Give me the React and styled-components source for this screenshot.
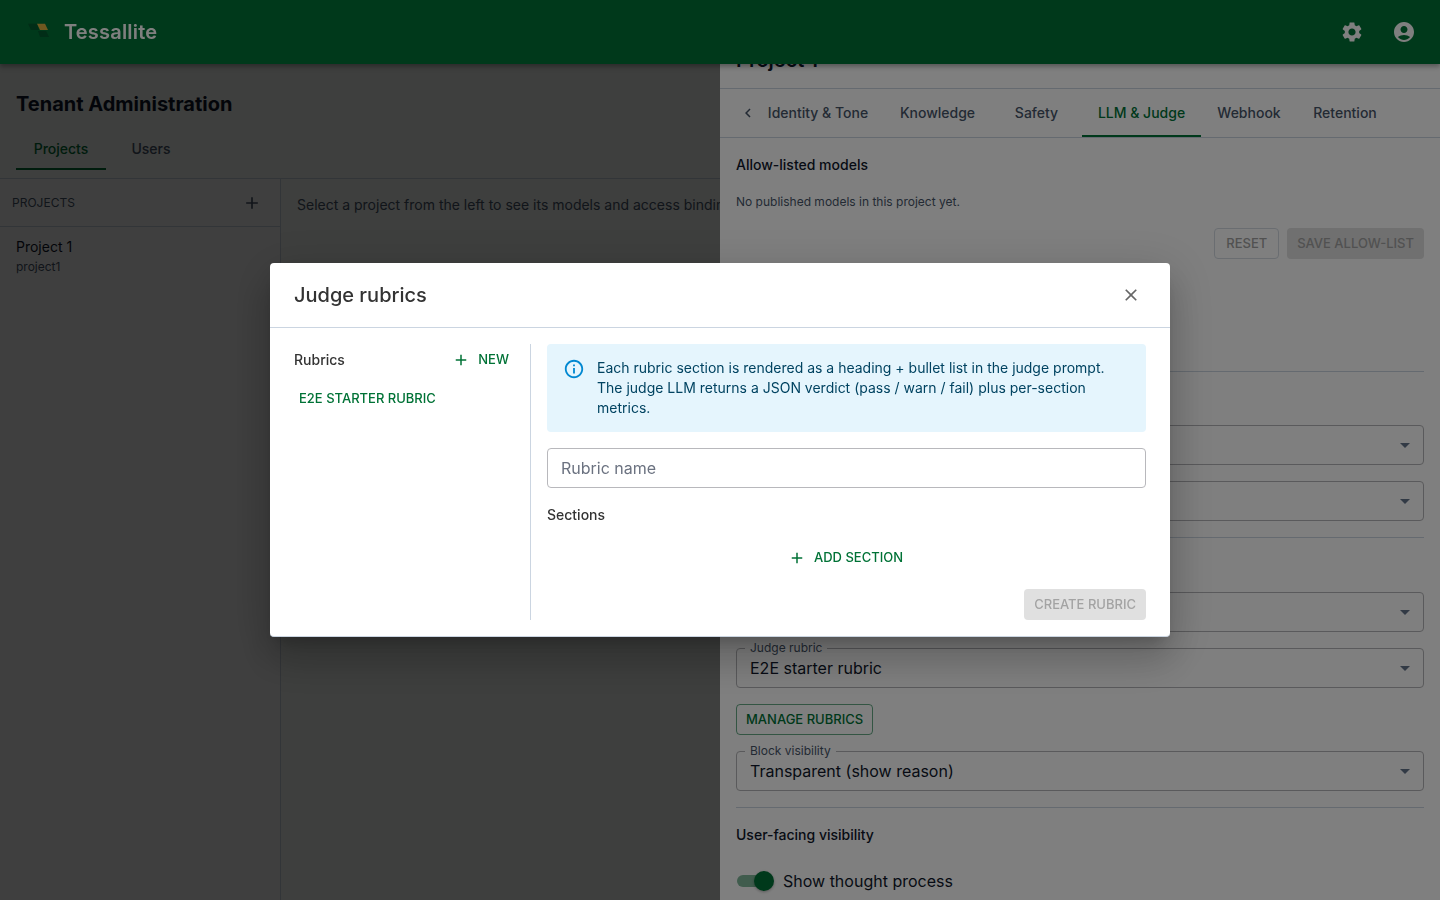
import React from "react";
import styled, { createGlobalStyle } from "styled-components";

const GlobalStyle = createGlobalStyle`
  * {
    box-sizing: border-box;
  }
  html, body {
    margin: 0;
    padding: 0;
    height: 100%;
    overflow: hidden;
    background: #f8fcf8;
    font-family: "Inter", "Liberation Sans", sans-serif;
    color: #0f172a;
  }
`;

const Page = styled.div`
  height: 900px;
  display: flex;
  flex-direction: column;
`;

const Header = styled.header`
  position: relative;
  z-index: 20;
  height: 64px;
  flex: none;
  background: #007236;
  box-shadow: 0 2px 4px rgba(0, 0, 0, 0.2), 0 4px 5px rgba(0, 0, 0, 0.14);
  display: flex;
  align-items: center;
  padding: 0 24px;
`;

const Brand = styled.div`
  display: flex;
  align-items: center;
  gap: 12px;
  flex: 1;
  font-size: 20px;
  font-weight: 600;
  letter-spacing: 0.2px;
  color: #fff;
`;

const HeaderIcons = styled.div`
  display: flex;
  gap: 28px;
  color: #fff;
  align-items: center;
`;

const Title = styled.h1`
  margin: 0;
  padding: 28px 16px 0;
  font-size: 20px;
  line-height: 24px;
  font-weight: 700;
  color: #0f172a;
`;

const TopTabs = styled.div`
  display: flex;
  margin-top: 12px;
  padding: 0 16px 8px;
  height: 51px;
  border-bottom: 1px solid #cbd5e1;
`;

const TopTab = styled.div`
  width: ${(p) => p.$w}px;
  height: 42px;
  padding-bottom: 2px;
  display: flex;
  align-items: center;
  justify-content: center;
  font-size: 14px;
  font-weight: 500;
  color: ${(p) => (p.$active ? "#007236" : "#475569")};
  box-shadow: ${(p) => (p.$active ? "inset 0 -2px 0 #007236" : "none")};
`;

const Split = styled.div`
  flex: 1;
  display: flex;
  min-height: 0;
`;

const Sidebar = styled.aside`
  width: 281px;
  flex: none;
  background: #fff;
  border-right: 1px solid #cbd5e1;
`;

const SidebarHead = styled.div`
  height: 48px;
  display: flex;
  align-items: center;
  justify-content: space-between;
  padding: 0 18px 0 12px;
  border-bottom: 1px solid #cbd5e1;
  font-size: 12px;
  color: #475569;
`;

const ProjectRow = styled.div`
  padding: 10px 16px;
`;

const ProjectName = styled.div`
  font-size: 14px;
  line-height: 20px;
  color: #0f172a;
`;

const ProjectSlug = styled.div`
  font-size: 12px;
  line-height: 18px;
  color: #475569;
  margin-top: 1px;
`;

const Hint = styled.div`
  padding: 16px;
  font-size: 14px;
  line-height: 20px;
  color: #475569;
  white-space: nowrap;
  overflow: hidden;
  flex: 1;
`;

const DrawerBackdrop = styled.div`
  position: fixed;
  inset: 0;
  z-index: 10;
  background: rgba(0, 0, 0, 0.5);
`;

const Drawer = styled.aside`
  position: fixed;
  top: 0;
  right: 0;
  bottom: 0;
  width: 720px;
  z-index: 11;
  background: #fff;
  overflow: hidden;
`;

const DrawerHeading = styled.div`
  height: 89px;
  padding: 46px 16px 0;
  border-bottom: 1px solid #cbd5e1;
  font-size: 20px;
  line-height: 28px;
  font-weight: 600;
  color: #0f172a;
`;

const DrawerTabs = styled.div`
  height: 49px;
  display: flex;
  align-items: stretch;
  border-bottom: 1px solid #cbd5e1;
`;

const ScrollArrow = styled.div`
  width: 40px;
  flex: none;
  display: flex;
  align-items: center;
  justify-content: center;
  padding-left: 16px;
  color: #475569;
`;

const DrawerTab = styled.div`
  margin-left: ${(p) => p.$ml || 0}px;
  width: ${(p) => p.$w}px;
  height: 48px;
  padding-bottom: 2px;
  display: flex;
  align-items: center;
  justify-content: center;
  font-size: 14px;
  font-weight: 500;
  color: ${(p) => (p.$active ? "#007236" : "#475569")};
  box-shadow: ${(p) => (p.$active ? "inset 0 -2px 0 #007236" : "none")};
`;

const DrawerBody = styled.div`
  padding: 0 16px;
  display: flex;
  flex-direction: column;
`;

const SectionTitle = styled.div`
  font-size: 14px;
  line-height: 20px;
  font-weight: 500;
  color: #0f172a;
  margin-top: ${(p) => p.$mt}px;
`;

const Muted = styled.div`
  font-size: 12px;
  line-height: 18px;
  color: #475569;
  margin-top: 18px;
`;

const ButtonRow = styled.div`
  display: flex;
  justify-content: flex-end;
  gap: 8px;
  margin-top: 17px;
`;

const ResetButton = styled.div`
  height: 31px;
  padding: 0 11px 1px;
  display: flex;
  align-items: center;
  border: 1px solid #d4dae2;
  border-radius: 4px;
  font-size: 13px;
  font-weight: 500;
  color: #a3a3a3;
`;

const SaveButton = styled.div`
  height: 31px;
  padding: 0 10px 1px;
  display: flex;
  align-items: center;
  border-radius: 4px;
  background: #e0e0e0;
  font-size: 13px;
  font-weight: 500;
  color: #a3a3a3;
`;

const Rule = styled.div`
  height: 1px;
  background: #cbd5e1;
  margin-top: ${(p) => p.$mt}px;
  flex: none;
`;

const SelectBox = styled.div`
  position: relative;
  height: 40px;
  margin-top: ${(p) => p.$mt}px;
  border: 1px solid #b4b4b8;
  border-radius: 4px;
  display: flex;
  align-items: center;
  padding: 0 13px;
  font-size: 16px;
  color: #0f172a;
  flex: none;
`;

const FloatLabel = styled.span`
  position: absolute;
  top: -9px;
  left: 8px;
  padding: 0 5px;
  background: #fff;
  font-size: 12px;
  line-height: 16px;
  color: #475569;
`;

const Caret = styled.span`
  position: absolute;
  right: 13px;
  top: 17px;
  width: 0;
  height: 0;
  border-left: 5px solid transparent;
  border-right: 5px solid transparent;
  border-top: 5px solid #64748b;
`;

const ManageButton = styled.div`
  align-self: flex-start;
  height: 31px;
  margin-top: 16px;
  padding: 0 9px 1px;
  display: flex;
  align-items: center;
  border: 1px solid rgba(0, 114, 54, 0.6);
  border-radius: 4px;
  font-size: 13px;
  font-weight: 500;
  color: #007236;
`;

const SwitchRow = styled.div`
  display: flex;
  align-items: center;
  gap: 9px;
  margin-top: 26px;
  font-size: 16px;
  color: #0f172a;
`;

const SwitchTrack = styled.div`
  position: relative;
  width: 34px;
  height: 12px;
  margin: 0 3px 0 1px;
  border-radius: 6px;
  background: #80b89a;
`;

const SwitchThumb = styled.span`
  position: absolute;
  right: -3px;
  top: -4px;
  width: 20px;
  height: 20px;
  border-radius: 50%;
  background: #007236;
  box-shadow: 0 1px 3px rgba(0, 0, 0, 0.3);
`;

const DialogBackdrop = styled.div`
  position: fixed;
  inset: 0;
  z-index: 30;
  background: rgba(0, 0, 0, 0.5);
  display: flex;
  align-items: center;
  justify-content: center;
`;

const Dialog = styled.div`
  width: 900px;
  height: 374px;
  background: #fff;
  border-radius: 4px;
  border-bottom: 1px solid #cbd5e1;
  box-shadow: 0 11px 15px -7px rgba(0, 0, 0, 0.2),
    0 24px 38px 3px rgba(0, 0, 0, 0.14), 0 9px 46px 8px rgba(0, 0, 0, 0.12);
  display: flex;
  flex-direction: column;
`;

const DialogHead = styled.div`
  height: 65px;
  flex: none;
  border-bottom: 1px solid #cbd5e1;
  display: flex;
  align-items: center;
  justify-content: space-between;
  padding: 0 29px 0 24px;
  font-size: 20px;
  font-weight: 500;
  color: #333;
`;

const CloseIcon = styled.span`
  display: flex;
  color: #666;
`;

const DialogBody = styled.div`
  flex: 1;
  display: flex;
  padding: 16px 24px;
  min-height: 0;
`;

const RubricColumn = styled.div`
  width: 237px;
  flex: none;
  border-right: 1px solid #cbd5e1;
  padding-right: 16px;
`;

const RubricHead = styled.div`
  display: flex;
  align-items: center;
  justify-content: space-between;
  height: 31px;
  font-size: 14px;
  font-weight: 500;
  color: #333;
`;

const TextAction = styled.div`
  display: flex;
  align-items: center;
  gap: 8px;
  padding-right: ${(p) => (p.$center ? 2 : 5)}px;
  font-size: 13px;
  font-weight: 500;
  color: #007236;
`;

const ActionLabel = styled.span`
  margin-bottom: 2px;
`;

const RubricItem = styled.div`
  margin-top: 15px;
  padding-left: 5px;
  font-size: 13px;
  line-height: 16px;
  font-weight: 500;
  color: #007236;
`;

const FormColumn = styled.div`
  flex: 1;
  padding-left: 16px;
  display: flex;
  flex-direction: column;
`;

const InfoBox = styled.div`
  height: 88px;
  flex: none;
  display: flex;
  gap: 12px;
  padding: 14px 16px;
  border-radius: 4px;
  background: #e5f5fd;
  font-size: 14px;
  line-height: 20px;
  color: #014361;
`;

const InfoIcon = styled.span`
  flex: none;
  display: flex;
  height: 20px;
  color: #0288d1;
`;

const NameInput = styled.div`
  height: 40px;
  flex: none;
  margin-top: 16px;
  border: 1px solid #b8b8bc;
  border-radius: 4px;
  display: flex;
  align-items: center;
  padding: 0 13px;
  font-size: 16px;
  color: #6b7280;
`;

const SectionsLabel = styled.div`
  margin-top: 17px;
  font-size: 14px;
  line-height: 20px;
  font-weight: 500;
  color: #333;
`;

const AddRow = styled.div`
  margin-top: 17px;
  height: 32px;
  display: flex;
  align-items: center;
  justify-content: center;
`;

const FormFooter = styled.div`
  margin-top: auto;
  display: flex;
  justify-content: flex-end;
`;

const CreateButton = styled.div`
  height: 31px;
  padding: 0 10px 1px;
  display: flex;
  align-items: center;
  border-radius: 4px;
  background: #e0e0e0;
  font-size: 13px;
  font-weight: 500;
  color: #a3a3a3;
`;

const Logo = () => (
  <svg width="28" height="20" viewBox="0 0 28 20">
    <path d="M4 1.7h9L15 8H7z" fill="#025a2e" />
    <path d="M13 1.7h8L24 8h-8z" fill="#e0b040" />
    <path d="M14 9h8l3 6h-9z" fill="#025a2e" />
  </svg>
);

const Plus = ({ size = 18 }) => (
  <svg width={size} height={size} viewBox="0 0 24 24" fill="currentColor">
    <path d="M19 13h-6v6h-2v-6H5v-2h6V5h2v6h6v2z" />
  </svg>
);

const Gear = () => (
  <svg width="24" height="24" viewBox="0 0 24 24" fill="currentColor">
    <path d="M19.14 12.94c.04-.3.06-.61.06-.94 0-.32-.02-.64-.07-.94l2.03-1.58c.18-.14.23-.41.12-.61l-1.92-3.32c-.12-.22-.37-.29-.59-.22l-2.39.96c-.5-.38-1.03-.7-1.62-.94l-.36-2.54c-.04-.24-.24-.41-.48-.41h-3.84c-.24 0-.43.17-.47.41l-.36 2.54c-.59.24-1.13.57-1.62.94l-2.39-.96c-.22-.08-.47 0-.59.22L2.74 8.87c-.12.21-.08.47.12.61l2.03 1.58c-.05.3-.09.63-.09.94s.02.64.07.94l-2.03 1.58c-.18.14-.23.41-.12.61l1.92 3.32c.12.22.37.29.59.22l2.39-.96c.5.38 1.03.7 1.62.94l.36 2.54c.05.24.24.41.48.41h3.84c.24 0 .44-.17.47-.41l.36-2.54c.59-.24 1.13-.56 1.62-.94l2.39.96c.22.08.47 0 .59-.22l1.92-3.32c.12-.22.07-.47-.12-.61l-2.01-1.58zM12 15.6c-1.98 0-3.6-1.62-3.6-3.6s1.62-3.6 3.6-3.6 3.6 1.62 3.6 3.6-1.62 3.6-3.6 3.6z" />
  </svg>
);

const Account = () => (
  <svg width="24" height="24" viewBox="0 0 24 24" fill="currentColor">
    <path d="M12 2C6.48 2 2 6.48 2 12s4.48 10 10 10 10-4.48 10-10S17.52 2 12 2zm0 4c1.93 0 3.5 1.57 3.5 3.5S13.93 13 12 13s-3.5-1.57-3.5-3.5S10.07 6 12 6zm0 14c-2.03 0-4.43-.82-6.14-2.88C7.55 15.8 9.68 15 12 15s4.45.8 6.14 2.12C16.43 19.18 14.03 20 12 20z" />
  </svg>
);

const Close = () => (
  <svg width="20" height="20" viewBox="0 0 24 24" fill="currentColor">
    <path d="M19 6.41 17.59 5 12 10.59 6.41 5 5 6.41 10.59 12 5 17.59 6.41 19 12 13.41 17.59 19 19 17.59 13.41 12z" />
  </svg>
);

const ChevronLeft = () => (
  <svg width="18" height="18" viewBox="0 0 24 24" fill="currentColor">
    <path d="M15.41 7.41 14 6l-6 6 6 6 1.41-1.41L10.83 12z" />
  </svg>
);

const InfoOutline = () => (
  <svg width="22" height="22" viewBox="0 0 24 24" fill="currentColor">
    <path d="M11 7h2v2h-2zm0 4h2v6h-2zm1-9C6.48 2 2 6.48 2 12s4.48 10 10 10 10-4.48 10-10S17.52 2 12 2zm0 18c-4.41 0-8-3.59-8-8s3.59-8 8-8 8 3.59 8 8-3.59 8-8 8z" />
  </svg>
);

const Select = ({ label, value, mt }) => (
  <SelectBox $mt={mt}>
    {label && <FloatLabel>{label}</FloatLabel>}
    {value}
    <Caret />
  </SelectBox>
);

export default function App() {
  return (
    <>
      <GlobalStyle />
      <Page>
        <Header>
          <Brand>
            <Logo />
            Tessallite
          </Brand>
          <HeaderIcons>
            <Gear />
            <Account />
          </HeaderIcons>
        </Header>
        <Title>Tenant Administration</Title>
        <TopTabs>
          <TopTab $active $w={90}>Projects</TopTab>
          <TopTab $w={90}>Users</TopTab>
        </TopTabs>
        <Split>
          <Sidebar>
            <SidebarHead>
              PROJECTS
              <Plus size={20} />
            </SidebarHead>
            <ProjectRow>
              <ProjectName>Project 1</ProjectName>
              <ProjectSlug>project1</ProjectSlug>
            </ProjectRow>
          </Sidebar>
          <Hint>Select a project from the left to see its models and access bindings.</Hint>
        </Split>
      </Page>

      <DrawerBackdrop />
      <Drawer>
        <DrawerHeading>Project 1</DrawerHeading>
        <DrawerTabs>
          <ScrollArrow>
            <ChevronLeft />
          </ScrollArrow>
          <DrawerTab $w={116}>Identity &amp; Tone</DrawerTab>
          <DrawerTab $w={107} $ml={8}>Knowledge</DrawerTab>
          <DrawerTab $w={79} $ml={6}>Safety</DrawerTab>
          <DrawerTab $active $w={119} $ml={6}>LLM &amp; Judge</DrawerTab>
          <DrawerTab $w={96}>Webhook</DrawerTab>
          <DrawerTab $w={96}>Retention</DrawerTab>
        </DrawerTabs>
        <DrawerBody>
          <SectionTitle $mt={17}>Allow-listed models</SectionTitle>
          <Muted>No published models in this project yet.</Muted>
          <ButtonRow>
            <ResetButton>RESET</ResetButton>
            <SaveButton>SAVE ALLOW-LIST</SaveButton>
          </ButtonRow>
          <Rule $mt={112} />
          <Select mt={53} />
          <Select mt={16} />
          <Rule $mt={16} />
          <Select mt={54} />
          <Select mt={16} label="Judge rubric" value="E2E starter rubric" />
          <ManageButton>MANAGE RUBRICS</ManageButton>
          <Select mt={16} label="Block visibility" value="Transparent (show reason)" />
          <Rule $mt={16} />
          <SectionTitle $mt={17}>User-facing visibility</SectionTitle>
          <SwitchRow>
            <SwitchTrack>
              <SwitchThumb />
            </SwitchTrack>
            Show thought process
          </SwitchRow>
        </DrawerBody>
      </Drawer>

      <DialogBackdrop>
        <Dialog>
          <DialogHead>
            Judge rubrics
            <CloseIcon>
              <Close />
            </CloseIcon>
          </DialogHead>
          <DialogBody>
            <RubricColumn>
              <RubricHead>
                Rubrics
                <TextAction>
                  <Plus />
                  <ActionLabel>NEW</ActionLabel>
                </TextAction>
              </RubricHead>
              <RubricItem>E2E STARTER RUBRIC</RubricItem>
            </RubricColumn>
            <FormColumn>
              <InfoBox>
                <InfoIcon>
                  <InfoOutline />
                </InfoIcon>
                <span>
                  Each rubric section is rendered as a heading + bullet list in the judge prompt.
                  The judge LLM returns a JSON verdict (pass / warn / fail) plus per-section metrics.
                </span>
              </InfoBox>
              <NameInput>Rubric name</NameInput>
              <SectionsLabel>Sections</SectionsLabel>
              <AddRow>
                <TextAction $center>
                  <Plus />
                  <ActionLabel>ADD SECTION</ActionLabel>
                </TextAction>
              </AddRow>
              <FormFooter>
                <CreateButton>CREATE RUBRIC</CreateButton>
              </FormFooter>
            </FormColumn>
          </DialogBody>
        </Dialog>
      </DialogBackdrop>
    </>
  );
}
